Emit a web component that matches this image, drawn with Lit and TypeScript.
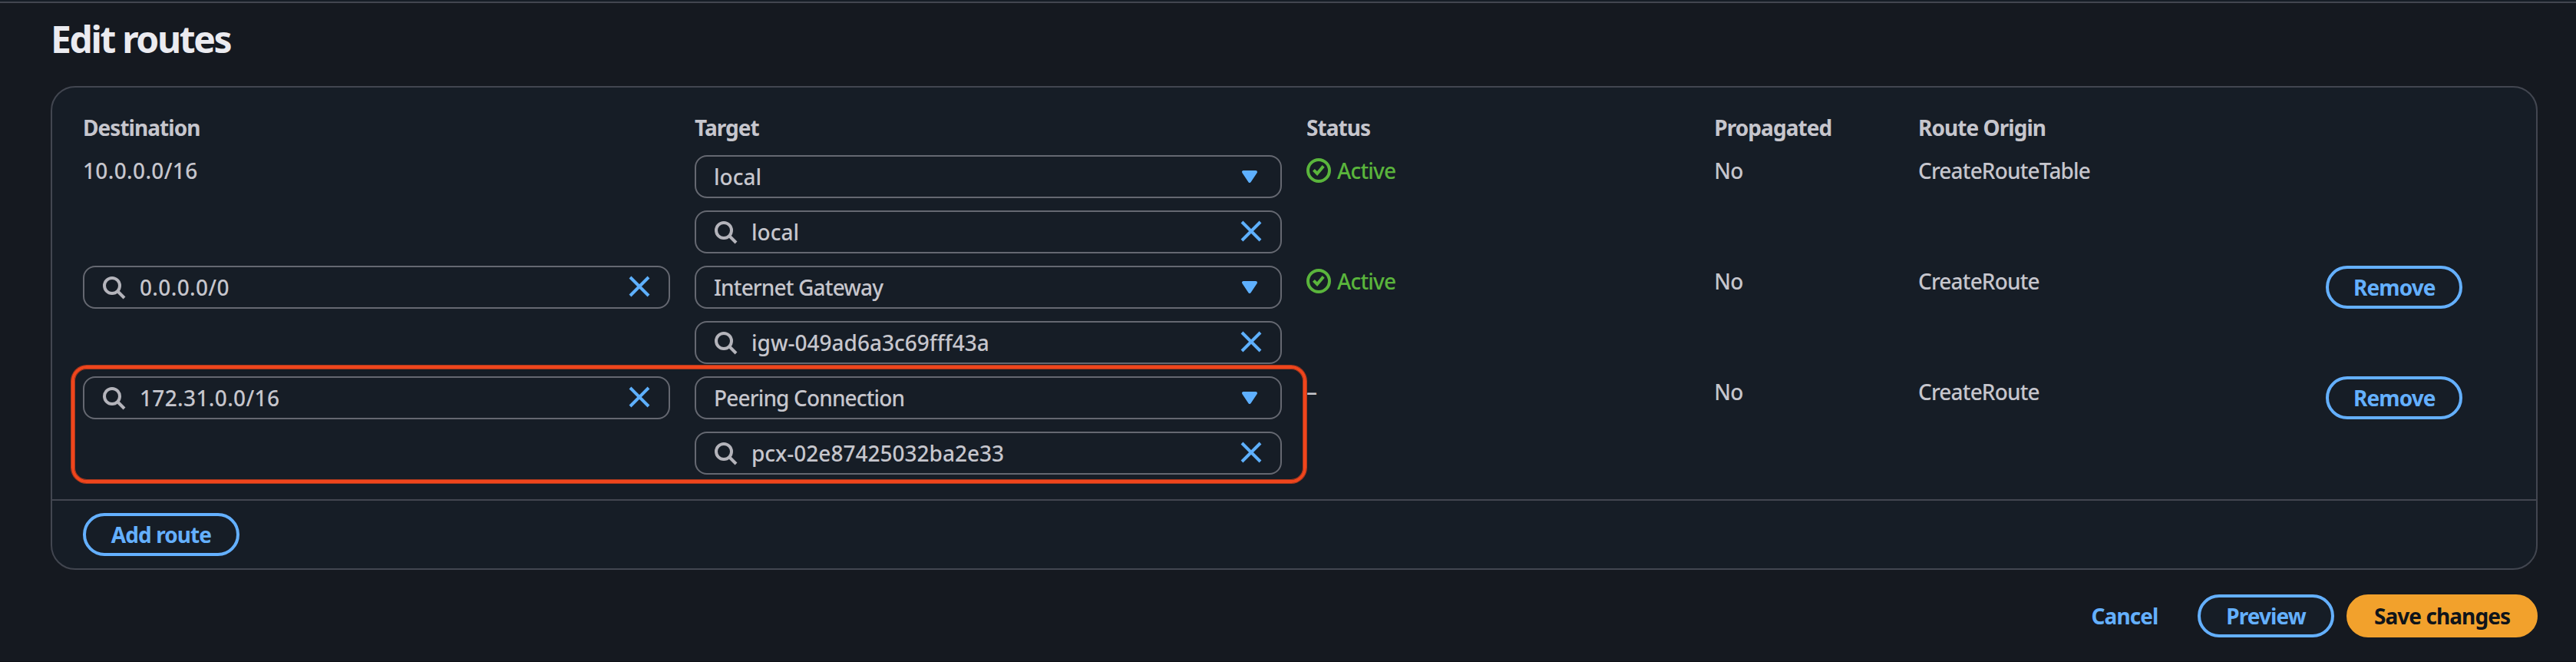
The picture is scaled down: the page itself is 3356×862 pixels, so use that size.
import { LitElement, html, css, svg, nothing } from "lit";
import { customElement } from "lit/decorators.js";
import { classMap } from "lit/directives/class-map.js";

interface Route {
  destination: string;
  fixed?: boolean;
  target: string;
  targetId: string;
  active: boolean;
  propagated: string;
  origin: string;
  highlighted?: boolean;
}

const ROUTES: Route[] = [
  { destination: "10.0.0.0/16", fixed: true, target: "local", targetId: "local", active: true, propagated: "No", origin: "CreateRouteTable" },
  { destination: "0.0.0.0/0", target: "Internet Gateway", targetId: "igw-049ad6a3c69fff43a", active: true, propagated: "No", origin: "CreateRoute" },
  { destination: "172.31.0.0/16", target: "Peering Connection", targetId: "pcx-02e87425032ba2e33", active: false, propagated: "No", origin: "CreateRoute", highlighted: true },
];

const icon = (name: string, body: unknown) =>
  html`<svg class="icon ${name}" viewBox="0 0 16 16" aria-hidden="true">${body}</svg>`;

const searchIcon = () => icon("search", svg`<circle cx="7" cy="7" r="5"/><path d="m15 15-4.5-4.5"/>`);
const closeIcon = () => icon("close", svg`<path d="m2 2 12 12M14 2 2 14"/>`);
const caretIcon = () => icon("caret", svg`<path d="M4 5h8l-4 6-4-6z"/>`);
const checkIcon = () => icon("check", svg`<circle cx="8" cy="8" r="7"/><path d="M4.7 7.7 7 10l4.1-4.8"/>`);

@customElement("app-root")
export class AppRoot extends LitElement {
  static styles = css`
    :host {
      display: block;
      box-sizing: border-box;
      height: 862px;
      background: #151920;
      border-top: 2px solid #161d26;
      border-bottom: 1px solid #0e1016;
      color: #c6c6cd;
      font: 500 28px/40px "Noto Sans", "Open Sans", sans-serif;
      letter-spacing: -0.85px;
      overflow: hidden;
    }
    * { box-sizing: border-box; }
    .page {
      border-top: 2px solid #424650;
      padding: 17px 50px 0 66px;
    }
    h1 {
      margin: 0 0 31px;
      color: #ebebf0;
      font-size: 48px;
      line-height: 60px;
      font-weight: 700;
      letter-spacing: -2.35px;
    }
    .card {
      border: 2px solid #424650;
      border-radius: 32px;
      background: #161d26;
    }
    .routes {
      display: flex;
      flex-direction: column;
      gap: 16px;
      padding: 32px 40px 32px;
    }
    .row {
      position: relative;
      display: grid;
      grid-template-columns: repeat(12, minmax(0, 1fr));
      column-gap: 32px;
      align-items: start;
    }
    .w3 { grid-column: span 3; }
    .w2 { grid-column: span 2; }
    .head { font-weight: 700; letter-spacing: -0.95px; }
    .cidr { letter-spacing: 0.35px; }
    .stack {
      display: flex;
      flex-direction: column;
      gap: 16px;
    }
    .field {
      display: flex;
      align-items: center;
      height: 56px;
      padding: 0 22px;
      border: 2px solid #656871;
      border-radius: 16px;
    }
    .select { padding: 0 24px 0 23px; }
    .value { flex: 1; }
    .select .value { padding-bottom: 1px; }
    .search + .value { padding-left: 18px; }
    .id { letter-spacing: 0; }
    .icon {
      flex: none;
      width: 32px;
      height: 32px;
      fill: none;
      stroke-width: 2px;
    }
    .search { stroke: #b4b4bb; }
    .close { stroke: #5eb0ff; margin-bottom: 2px; }
    .caret { stroke: #5eb0ff; fill: #5eb0ff; stroke-linejoin: round; }
    .check { stroke: #5ab53c; }
    .status {
      display: flex;
      align-items: center;
      gap: 8px;
      color: #5ab53c;
    }
    .button {
      justify-self: start;
      height: 56px;
      width: 178px;
      margin: 0;
      padding: 0;
      border: 4px solid #64b0ff;
      border-radius: 40px;
      background: #161d26;
      color: #64b0ff;
      font: 700 28px/40px "Noto Sans", "Open Sans", sans-serif;
      letter-spacing: -0.92px;
      white-space: nowrap;
    }
    .add { width: 204px; }
    .link { width: 158px; border-color: transparent; background: transparent; }
    .primary { width: 249px; border-color: #f2a12c; background: #f2a12c; color: #0f141a; }
    .footer {
      padding: 16px 40px;
      border-top: 2px solid #424650;
      display: flex;
    }
    .actions {
      display: flex;
      justify-content: flex-end;
      gap: 16px;
      margin-top: 32px;
    }
    .mark {
      position: absolute;
      left: -15px;
      top: -14px;
      width: 1609px;
      height: 153px;
      border: 4px solid #f0451c;
      border-radius: 20px;
      box-shadow: 0 0 0 1px #a8381d, inset 0 0 0 1px #a8381d;
    }
  `;

  private searchField(value: string, kind: "cidr" | "id") {
    return html`<div class="field">${searchIcon()}<span class="value ${kind}">${value}</span>${closeIcon()}</div>`;
  }

  private row(r: Route) {
    const plain = r.target === "local";
    return html`<div class="row">
      <div class="w3 cidr">${r.fixed ? r.destination : this.searchField(r.destination, "cidr")}</div>
      <div class="w3 stack">
        <div class="field select"><span class=${classMap({ value: true, id: plain })}>${r.target}</span>${caretIcon()}</div>
        ${this.searchField(r.targetId, "id")}
      </div>
      <div class="w2">${r.active ? html`<div class="status">${checkIcon()}<span>Active</span></div>` : "–"}</div>
      <div>${r.propagated}</div>
      <div class="w2">${r.origin}</div>
      ${r.fixed ? nothing : html`<button class="button">Remove</button>`}
      ${r.highlighted ? html`<div class="mark"></div>` : nothing}
    </div>`;
  }

  render() {
    return html`<main class="page">
      <h1>Edit routes</h1>
      <section class="card">
        <div class="routes">
          <div class="row head">
            <div class="w3">Destination</div>
            <div class="w3">Target</div>
            <div class="w2">Status</div>
            <div>Propagated</div>
            <div class="w2">Route Origin</div>
          </div>
          ${ROUTES.map((r) => this.row(r))}
        </div>
        <div class="footer"><button class="button add">Add route</button></div>
      </section>
      <div class="actions">
        <button class="button link">Cancel</button>
        <button class="button">Preview</button>
        <button class="button primary">Save changes</button>
      </div>
    </main>`;
  }
}
